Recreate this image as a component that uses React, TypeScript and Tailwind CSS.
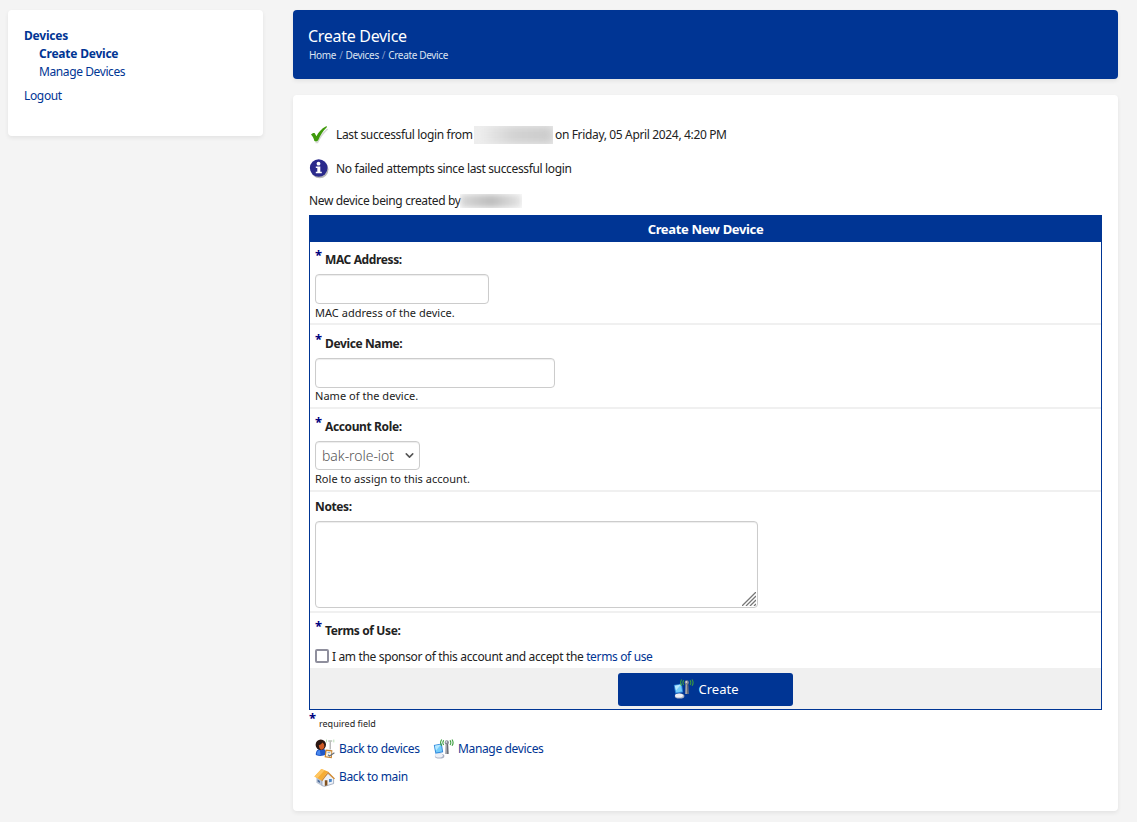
import React, { useState } from 'react';
import { ChevronDown } from 'lucide-react';

const CheckIcon = () => (
  <svg width="20" height="20" viewBox="0 0 20 20">
    <path d="M6.5 17.5 L8.5 17.5 C10.8 12.5 14 8 18.6 4" fill="none" stroke="#000" strokeOpacity=".16" strokeWidth="1.6" />
    <path d="M2 9.6 C3 8.2 4.8 7.6 5.8 8.2 L7.4 11.2 C9.5 7 12.5 3.6 16.8 1.4 C17.8 1.1 18.2 1.8 17.6 2.4 C13.8 6 11.2 10.4 9.2 15.2 C8.2 16.6 6.6 16.8 5.4 16 C4.8 13.6 3.8 11.4 2 9.6 Z" fill="#3f9a0b" />
  </svg>
);

const InfoIcon = () => (
  <svg width="20" height="20" viewBox="0 0 20 20">
    <circle cx="10.7" cy="10.5" r="8.8" fill="#000" opacity=".28" />
    <circle cx="9.7" cy="9" r="8.8" fill="#2b2a8c" />
    <circle cx="9.5" cy="4.7" r="1.9" fill="#fff" />
    <path d="M6.8 7.4h4.5v5.4h1.5v1.5H6.8v-1.5h1.5V8.9H6.8z" fill="#fff" />
  </svg>
);

const AntennaIcon = () => (
  <svg width="22" height="20" viewBox="0 0 22 20">
    <ellipse cx="6.6" cy="17" rx="4.8" ry="2.6" fill="#a9b0c4" />
    <ellipse cx="6" cy="16.5" rx="3.9" ry="2" fill="#edf0f7" />
    <path d="M.8 6 L8.8 4.4 L10.2 13.2 L2.4 14.8 Z" fill="#3289dc" />
    <path d="M1.8 6.8 L8 5.6 L9.1 12.4 L3.2 13.6 Z" fill="#74ccfa" />
    <path d="M1.8 6.8 L8 5.6 L3 11.5 Z" fill="#b6e8ff" />
    <path d="M12.5 4.5h2.6l.4 10.5h-3.3z" fill="#a2a3aa" />
    <path d="M14 4.5h1.1l.4 10.5h-1.3z" fill="#63656e" />
    <circle cx="13.8" cy="3.4" r="2.1" fill="#858791" />
    <circle cx="13.4" cy="3" r=".9" fill="#d8d9df" />
    <g fill="none" stroke="#3d9d3d" strokeWidth="1.1">
      <path d="M10.7 1.2Q9 3.6 10.7 6" />
      <path d="M8.7 .5Q6.5 3.6 8.7 6.8" />
      <path d="M17 1.2Q18.7 3.6 17 6" />
      <path d="M19 .5Q21.2 3.6 19 6.8" />
    </g>
  </svg>
);

const UserDeviceIcon = () => (
  <svg width="21" height="20" viewBox="0 0 21 20">
    <path d="M15.2 2.5v8" stroke="#a5a5a5" strokeWidth="1.1" />
    <path d="M13.2 2h4" stroke="#a9b5a9" strokeWidth="1.2" />
    <path d="M11.5 .6v2.8M18.8 .6v2.8" stroke="#b9e0b7" strokeWidth="1" />
    <path d="M.8 16C.6 12 2.6 9.8 6.4 9.8C10.2 9.8 11.6 11.8 11.4 15.6Q6 18 .8 16" fill="#1f57c8" />
    <path d="M1.9 13.6Q2.6 11.4 4.8 11L5.6 16L2 15.6Z" fill="#4a89ee" />
    <circle cx="5.8" cy="5.8" r="5.2" fill="#2b1712" />
    <path d="M3.8 6.3Q6.4 5.6 7.4 3.6Q9.8 5 9.4 7.8Q8.6 10.8 6.4 10.8Q4 10.1 3.8 6.3" fill="#cf5a25" />
    <path d="M10.6 10.6l6.8.7-.6 8-7.2-1z" fill="#c98128" />
    <path d="M11.6 12l4.8.5-.5 5.6-5.1-.8z" fill="#f7f4ec" />
    <path d="M13 15.8l1.6 1.2 4.8-3.2" fill="none" stroke="#66707c" strokeWidth="1.1" />
    <path d="M12.6 13.6h2.6" stroke="#86add6" strokeWidth="1" />
  </svg>
);

const HomeIcon = () => (
  <svg width="22" height="19" viewBox="0 0 22 19">
    <path d="M2.4 9 L8 12.5 V18 L2.4 14.8 Z" fill="#b9c4d6" />
    <path d="M8 11.5 L14 5.5 L19.6 10.5 V15.6 L10.5 18.4 L8 17.6 Z" fill="#eef1f7" stroke="#8996ad" strokeWidth=".7" />
    <path d="M7.4 1 L14 3.4 L7.4 12.6 L.4 8.6 Z" fill="#f6ad35" />
    <path d="M7.4 1 L10.6 2.2 L3.6 10 L.4 8.6 Z" fill="#ffc661" />
    <path d="M7.4 12.6 L14 3.4 L21 10.4 L20 11.2 L14 5.4 L8.2 13.3Z" fill="#d68a2c" />
    <path d="M10.8 12.2h2.6v5l-2.6.7z" fill="#80511f" />
    <path d="M15 11l2.8.1v2.7l-2.8.5z" fill="#4787cc" />
    <path d="M3.6 11.6l2.3 1.5v2l-2.3-1.5z" fill="#4a6a98" />
  </svg>
);

const Asterisk = () => (
  <span className="relative -top-[4px] mr-[3px] inline-block w-[7px] text-[13px] font-bold tracking-normal text-[#000080]">*</span>
);

interface RowProps {
  className: string;
  label: string;
  labelClass: string;
  required?: boolean;
  help?: string;
  helpClass?: string;
  children: React.ReactNode;
}

const Row: React.FC<RowProps> = ({ className, label, labelClass, required, help, helpClass = '', children }) => (
  <div className={`px-[5px] ${className}`}>
    <div className={`text-[12px] leading-[18px] font-bold whitespace-nowrap tracking-[-0.38px] ${labelClass}`}>
      {required && <Asterisk />}
      {label}
    </div>
    {children}
    {help && <p className={`text-[11px] leading-[18px] tracking-[0.03px] ${helpClass}`}>{help}</p>}
  </div>
);

const field = 'block rounded-[4px] border border-[#ccc] bg-white shadow-[inset_0_1px_1px_rgba(0,0,0,0.075)] outline-none';

export default function App() {
  const [mac, setMac] = useState('');
  const [name, setName] = useState('');
  const [notes, setNotes] = useState('');
  const [accepted, setAccepted] = useState(false);

  return (
    <div className="flex h-[822px] items-start gap-[30px] overflow-hidden bg-[#f4f4f4] pt-[10px] pl-2 font-['Noto_Sans',sans-serif] text-[12px] leading-[18px] tracking-[-0.35px] text-[#222]">
      {/* Sidebar */}
      <nav className="h-[126px] w-[255px] shrink-0 rounded-[4px] bg-white px-4 pt-[17px] text-[#003594] shadow-[0_2px_4px_rgba(0,0,0,0.07)]">
        <a className="block font-bold tracking-[-0.22px]">Devices</a>
        <a className="block pl-[15px] font-bold tracking-[-0.22px]">Create Device</a>
        <a className="block pl-[15px] tracking-[-0.4px]">Manage Devices</a>
        <a className="mt-[6px] block">Logout</a>
      </nav>

      <div className="flex w-[825px] shrink-0 flex-col gap-4">
        <header className="h-[69px] rounded-[4px] bg-[#003594] px-4 pt-[14px] text-white shadow-[0_2px_4px_rgba(0,0,0,0.07)]">
          <h1 className="-ml-px text-[16px] leading-[24px] tracking-[-0.3px]">Create Device</h1>
          <div className="flex gap-[3px] text-[10px] leading-[15px] tracking-[-0.33px] text-[#dbe3f1]">
            <span>Home</span>
            <span className="text-[#8099ca]">/</span>
            <span>Devices</span>
            <span className="text-[#8099ca]">/</span>
            <span>Create Device</span>
          </div>
        </header>

        <main className="h-[716px] rounded-[4px] bg-white px-4 pt-[30px] shadow-[0_2px_4px_rgba(0,0,0,0.07)]">
          <div className="flex h-5 items-center whitespace-nowrap">
            <CheckIcon />
            <span className="ml-[7px] w-[136px]">Last successful login from</span>
            <span className="ml-[2px] h-[18px] w-[79px] overflow-hidden bg-[#ededed]">
              <span className="block h-full w-full bg-linear-to-r from-[#f2f2f2] via-[#d2d2d2] to-[#cbcbcb] blur-[4px]" />
            </span>
            <span className="ml-[2px]">on Friday, 05 April 2024, 4:20 PM</span>
          </div>
          <div className="mt-[14px] flex h-5 items-center">
            <InfoIcon />
            <span className="ml-[7px]">No failed attempts since last successful login</span>
          </div>
          <div className="mt-[13px] flex h-[18px] items-center">
            <span className="w-[151px] whitespace-nowrap">New device being created by</span>
            <span className="h-[14px] w-[62px] overflow-hidden">
              <span className="block h-full w-full bg-linear-to-r from-[#d8d8d8] via-[#bdbdbd] to-[#e5e5e5] blur-[3px]" />
            </span>
          </div>

          <form className="mt-[5px] h-[495px] border border-[#003594]" onSubmit={e => e.preventDefault()}>
            <h2 className="h-[26px] bg-[#003594] text-center text-[13px] leading-[27px] font-bold text-white">Create New Device</h2>

            <Row className="h-[83px] border-b-2 border-[#f0f0f0]" label="MAC Address:" labelClass="h-[32px] pt-[8px]" required help="MAC address of the device.">
              <input className={`h-[30px] w-[174px] px-[6px] ${field}`} value={mac} onChange={e => setMac(e.target.value)} />
            </Row>
            <Row className="h-[84px] border-b-2 border-[#f0f0f0]" label="Device Name:" labelClass="h-[33px] pt-[9px]" required help="Name of the device." helpClass="-mt-px">
              <input className={`h-[30px] w-[240px] px-[6px] ${field}`} value={name} onChange={e => setName(e.target.value)} />
            </Row>
            <Row className="h-[83px] border-b-2 border-[#f0f0f0]" label="Account Role:" labelClass="h-[32px] pt-[8px]" required help="Role to assign to this account.">
              <button type="button" className={`h-[29px] w-[105px] text-[14px] text-[#555] ${field}`}>
                <span className="flex items-center justify-between pr-[3px] pl-[6px] font-light tracking-[-0.05px] whitespace-nowrap">
                  bak-role-iot
                  <ChevronDown size={13} strokeWidth={2.8} />
                </span>
              </button>
            </Row>
            <Row className="h-[121px] border-b-2 border-[#f0f0f0]" label="Notes:" labelClass="h-[29px] pt-[6px]">
              <div className="relative h-[87px] w-[443px]">
                <textarea className={`h-full w-full resize-none px-[6px] ${field}`} value={notes} onChange={e => setNotes(e.target.value)} />
                <svg className="absolute right-[2px] bottom-[2px]" width="14" height="14" viewBox="0 0 14 14" stroke="#777" strokeWidth="1.3">
                  <path d="M0 14L14 0M4 14L14 4M8 14L14 8M12 14L14 12" />
                </svg>
              </div>
            </Row>
            <Row className="h-[55px]" label="Terms of Use:" labelClass="h-[32px] pt-[8px]" required>
              <label className="flex h-[23px] items-center whitespace-nowrap">
                <input
                  type="checkbox"
                  className="mr-[3px] mb-[2px] h-[14px] w-[14px] appearance-none rounded-[2px] border-2 border-[#8f8f9d] bg-white checked:bg-[#003594]"
                  checked={accepted}
                  onChange={e => setAccepted(e.target.checked)}
                />
                <span>I am the sponsor of this account and accept the <a className="text-[#003594]">terms of use</a></span>
              </label>
            </Row>

            <div className="flex h-[41px] justify-center bg-[#f0f0f0] pt-[5px]">
              <button className="flex h-[33px] w-[175px] items-center justify-center gap-[4px] rounded-[3px] bg-[#003594] pb-[2px] text-[13px] tracking-normal text-white">
                <AntennaIcon />
                Create
              </button>
            </div>
          </form>

          <div className="h-[25px] pt-[3px] text-[9px] tracking-normal">
            <Asterisk />required field
          </div>
          <div className="flex h-7 items-center text-[#003594]">
            <a className="flex w-[119px] items-center gap-[3px] pl-[6px] whitespace-nowrap"><UserDeviceIcon />Back to devices</a>
            <a className="flex items-center gap-[3px] pl-[5px] whitespace-nowrap"><AntennaIcon />Manage devices</a>
          </div>
          <div className="flex h-7 items-center text-[#003594]">
            <a className="flex items-center gap-[3px] pl-[5px] whitespace-nowrap"><HomeIcon />Back to main</a>
          </div>
        </main>
      </div>
    </div>
  );
}
